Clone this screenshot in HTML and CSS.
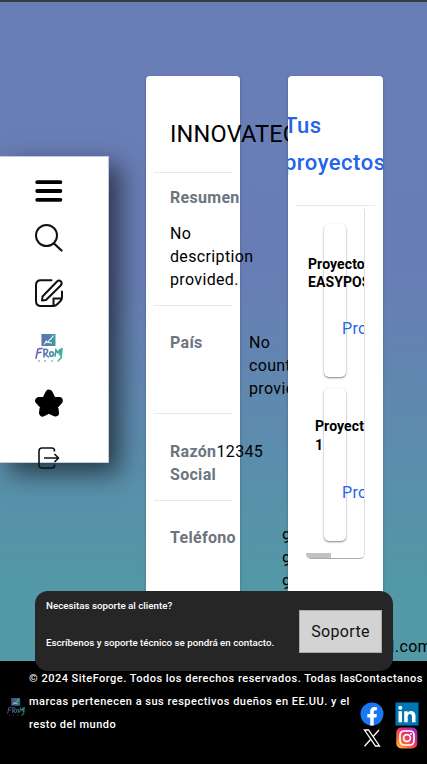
FILE: index.html
```html
<!DOCTYPE html>
<html lang="es">
<head>
<meta charset="utf-8">
<title>SiteForge</title>
<link rel="stylesheet" href="styles.css">
</head>
<body>
<svg class="defs" aria-hidden="true">
  <defs>
    <linearGradient id="brand" x1="0" y1="0" x2="28" y2="0" gradientUnits="userSpaceOnUse"><stop offset="0" stop-color="#7557bd"/><stop offset=".5" stop-color="#4b86a8"/><stop offset="1" stop-color="#35b991"/></linearGradient>
    <linearGradient id="insta" x1="0" y1="1" x2="1" y2="0"><stop offset="0" stop-color="#ffc83d"/><stop offset=".3" stop-color="#ff6b30"/><stop offset=".6" stop-color="#e32a78"/><stop offset="1" stop-color="#7b35d8"/></linearGradient>
    <symbol id="logo" viewBox="0 0 28 28">
      <rect x="6.5" y="0" width="14" height="12" fill="url(#brand)"/>
      <path d="M9 10.500l3-4M12.500 8.500l3-3.500M15.500 5.500l3-4M10 8l7 1" fill="none" stroke="#fff" stroke-width="1.100"/>
      <g fill="none" stroke="url(#brand)" stroke-width="1.600" stroke-linecap="round">
        <path d="M3 15L1 24M3 15l4-.6M2 19l4-.7"/>
        <path d="M9 16v7M8.500 15.500q5-1 4 2t-3 2l4 3.500"/>
        <ellipse cx="16.500" cy="20" rx="1.800" ry="2.300"/>
        <path d="M20 22l1-6 2 3 2-4v6M25 19l2-5-1 10-2 2"/>
        <path d="M4 27h.1M10 27h.1M17 27h.1M23 27h.1" stroke-width="1.500"/>
      </g>
    </symbol>
  </defs>
</svg>

<main class="page">
  <section class="card company">
    <h1 class="company-name">INNOVATECH</h1>
    <div class="row summary"><b>Resumen</b><p>No description provided.</p></div>
    <div class="row pair country"><b>País</b><span>No country provided.</span></div>
    <div class="row pair reason"><b>Razón Social</b><span>12345</span></div>
    <div class="row pair phone"><b>Teléfono</b><span>9<br>9<br>9</span></div>
    <div class="mail">gmail.com</div>
  </section>
  <section class="card projects">
    <h2><span>Tus proyectos</span></h2>
    <div class="list">
      <article class="project"><h3>Proyecto EASYPOS</h3><a>Proyecto</a></article>
      <article class="project second"><h3>Proyecto 1</h3><a>Proyecto</a></article>
      <div class="scrollbar"></div>
    </div>
  </section>
</main>

<footer class="footer">
  <svg class="footer-logo"><use href="#logo"/></svg>
  <p>© 2024 SiteForge. Todos los derechos reservados. Todas las marcas pertenecen a sus respectivos dueños en EE.UU. y el resto del mundo</p>
  <div class="contact">
    <span>Contactanos</span>
    <div class="social">
      <svg viewBox="0 0 24 24" width="24" height="24"><circle cx="12" cy="12" r="11.500" fill="#1877f2"/><path d="M10.200 23.500v-8H7.300v-3.400h2.900V9.600c0-3 1.700-4.500 4.300-4.500l2.400.2v2.900h-1.500c-1.300 0-1.700.8-1.700 1.700v2.200h3.200l-.5 3.400h-2.700v8z" fill="#fff"/></svg>
      <svg viewBox="0 0 24 24" width="24" height="24"><rect x=".5" y=".5" width="23" height="23" fill="#0077b5"/><path d="M3.500 9.300H7v11H3.500zM9.200 9.300h3.400v1.500c1.900-3 7.900-2.500 7.900 3v6.500H17v-5.900c0-3.500-4.300-3.200-4.300 0v5.900H9.200z" fill="#fff"/><circle cx="5.250" cy="5.700" r="2" fill="#fff"/></svg>
      <svg viewBox="0 0 24 24" width="24" height="24"><path d="M4.500 4h4l11 16h-4zM19 4l-6.200 7M11 13l-6.500 7.300" fill="none" stroke="#fff" stroke-width="1.300"/></svg>
      <svg viewBox="0 0 24 24" width="24" height="24"><rect x="1.300" y="1.500" width="21" height="21" rx="5" fill="url(#insta)"/><g fill="none" stroke="#fff" stroke-width="1.700"><rect x="5" y="5" width="14" height="14" rx="4"/><circle cx="12" cy="12" r="3.400"/></g><circle cx="16" cy="8" r="1" fill="#fff"/></svg>
    </div>
  </div>
</footer>

<nav class="sidebar">
  <svg class="i-menu" viewBox="0 0 28 22" width="28" height="22"><path d="M2.200 2.200h23.200M2.200 11h23.200M2.200 19.800h23.200" stroke="#000" stroke-width="3.800" stroke-linecap="round"/></svg>
  <svg class="i-search" viewBox="0 0 28 28" width="28" height="28"><circle cx="11.500" cy="11.500" r="10.500" fill="none" stroke="#111" stroke-width="2"/><path d="M19 19.500l7.500 7" stroke="#111" stroke-width="2.300" stroke-linecap="round"/></svg>
  <svg class="i-edit" viewBox="0 0 28 28" width="28" height="28"><path d="M16.500 1.200H6Q1 1.200 1 6v16q0 5 5 5h12.500q2 0 4-2l3-3q1.500-1.500 1.500-4v-5.500M18.500 27v-7.500h8M7 21.500l.5-4L22 2.500q2-2 4 0 1.500 2-.3 4L11 21z" fill="none" stroke="#111" stroke-width="2" stroke-linecap="round" stroke-linejoin="round"/></svg>
  <svg class="i-logo" width="28" height="28"><use href="#logo"/></svg>
  <svg class="i-star" viewBox="0 0 28 28" width="28" height="28"><path d="M14 4.500L17.500 11.500 24 11.800 19.300 17 20.200 23.700 14 20.500 7.800 23.700 8.700 17 4 11.800 10.500 11.500z" stroke="#000" stroke-width="7.600" stroke-linejoin="round"/></svg>
  <svg class="i-exit" viewBox="0 0 22 22" width="22" height="22"><path d="M16.500 4.500V3.700Q16.500 1 14 1H4Q1 1 1 4v14q0 3 3 3h10q2.500 0 2.500-2.700v-.8M6 11h14M16.500 7l4 4-4 4" fill="none" stroke="#111" stroke-width="1.600"/></svg>
</nav>

<aside class="toast">
  <div class="toast-text"><p>Necesitas soporte al cliente?</p><p>Escríbenos y soporte técnico se pondrá en contacto.</p></div>
  <button>Soporte</button>
</aside>
</body>
</html>
```

FILE: styles.css
```css
* { box-sizing: border-box; }
body {
  margin: 0;
  width: 427px;
  height: 764px;
  overflow: hidden;
  position: relative;
  display: flex;
  flex-direction: column;
  background: #000;
  font: 16px/23px Roboto, sans-serif;
  letter-spacing: .35px;
  color: #000;
}
h1, h2, h3, p { margin: 0; }
.defs { position: absolute; width: 0; height: 0; }
.page {
  height: 661px;
  flex: none;
  overflow: hidden;
  display: flex;
  gap: 48px;
  padding: 74px 0 0 146px;
  border-top: 2px solid #3a3a3c;
  background: linear-gradient(#697eb7 0, #697db5 40%, #5298a6 88%, #5298a6 100%);
}
.card {
  flex: none;
  height: 620px;
  border-radius: 4px;
  background: #fff;
  box-shadow: 0 1px 3px rgba(0,0,0,.25);
}
.company { width: 94px; padding: 0 8px; }
.company-name {
  height: 97px;
  padding: 41px 0 0 16px;
  border-bottom: 1px solid #e9e9eb;
  font-size: 23.500px;
  line-height: 34px;
  font-weight: 400;
  letter-spacing: .2px;
}
.row { padding-left: 16px; border-bottom: 1px solid #e9e9eb; }
.row b { color: #6c757d; letter-spacing: .3px; }
.summary { height: 133px; padding-top: 13px; }
.summary p { margin-top: 13px; width: 84px; }
.pair { display: flex; }
.pair b, .pair span { flex: none; }
.country { height: 108px; padding-top: 25px; }
.country b { width: 79px; }
.country span { width: 70px; }
.reason { height: 87px; padding-top: 26px; }
.reason b { width: 46.500px; }
.phone { height: 140px; padding-top: 25px; border: 0; }
.phone b { width: 112px; }
.mail { width: 278px; margin-top: -6px; text-align: right; }
.projects { width: 95px; overflow: hidden; padding: 0 8px; position: relative; }
.projects h2 {
  width: 79px;
  height: 130px;
  padding-top: 31px;
  border-bottom: 1px solid #e9e9eb;
  color: #2463eb;
  font-size: 22px;
  line-height: 37px;
  font-weight: 500;
  letter-spacing: .5px;
}
.projects h2 span { display: block; width: 103px; margin-left: -12px; }
.list {
  position: relative;
  width: 59px;
  height: 353px;
  margin-left: 10px;
  padding: 18px 0 0 18px;
  overflow: hidden;
  border-radius: 5px;
  border-right: 1px solid #dedede;
  border-bottom: 1px solid #aaa;
}
.project {
  width: 22px;
  height: 153px;
  margin-bottom: 11px;
  padding-top: 31px;
  border-radius: 5px;
  box-shadow: 0 1px 2px rgba(0,0,0,.5);
}
.project h3 {
  width: 70px;
  margin-left: -16px;
  font-size: 14px;
  line-height: 18px;
  letter-spacing: .1px;
  font-weight: 700;
}
.project a { display: block; width: 80px; margin: 26px 0 0 18px; color: #2463eb; }
.project.second { padding-top: 29px; }
.project.second h3 { width: 60px; margin-left: -9px; line-height: 19px; }
.project.second a { margin-top: 26px; }
.scrollbar { position: absolute; left: 0; bottom: 0; width: 25px; height: 5px; background: #c1c1c1; }
.footer {
  height: 103px;
  display: flex;
  align-items: flex-start;
  padding: 6px 0 0 7px;
  color: #fff;
  background: #000;
  font-size: 11px;
  font-weight: 500;
  letter-spacing: .5px;
}
.footer-logo { flex: none; width: 18px; height: 20px; margin: 30px 4px 0 0; opacity: .75; }
.footer p { flex: none; width: 327px; }
.contact { margin-left: -1px; white-space: nowrap; }
.social { display: grid; grid-template-columns: 24px 24px; column-gap: 11px; margin: 12px 0 0 5px; }
.social svg { display: block; }
.sidebar {
  position: absolute;
  left: 0;
  top: 156px;
  width: 109px;
  height: 307px;
  padding: 23px 0 0 35px;
  display: flex;
  flex-direction: column;
  background: #fff;
  border: 1px solid #c5cadb;
  border-left: 0;
  box-shadow: 10px 10px 24px rgba(0,0,0,.6);
}
.sidebar svg { flex: none; overflow: visible; }
.i-search { margin-top: 22px; }
.i-edit { margin-top: 27px; }
.i-logo { margin-top: 27px; }
.i-star { margin-top: 27px; }
.i-exit { margin: 30px 0 0 3px; }
.toast {
  position: absolute;
  left: 35px;
  top: 591px;
  width: 358px;
  height: 80px;
  border-radius: 13px;
  background: #262626;
  display: flex;
  color: #fff;
}
.toast-text { width: 264px; padding: 5px 0 0 11px; font-size: 9.760px; line-height: 20px; font-weight: 500; letter-spacing: 0; white-space: nowrap; }
.toast-text p + p { margin-top: 17px; }
.toast button {
  width: 83px;
  height: 43px;
  margin-top: 19px;
  padding: 0;
  border: 1px solid #aaa;
  background: #d3d3d3;
  color: #111;
  font: 16px Roboto, sans-serif;
  letter-spacing: .35px;
}
```
